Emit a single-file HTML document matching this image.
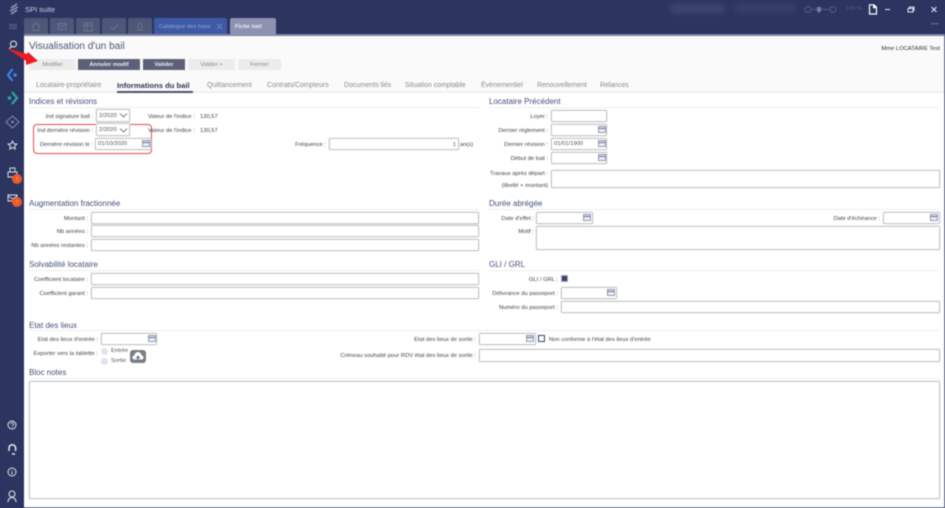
<!DOCTYPE html>
<html lang="fr"><head><meta charset="utf-8"><title>SPI suite</title>
<style>
html,body{margin:0;padding:0;background:#2c3560}
#p{position:relative;width:945px;height:508px;overflow:hidden;background:#2c3560;font-family:"Liberation Sans",sans-serif;filter:blur(.5px)}
#p div,#p svg{position:absolute}
.c{left:24px;top:36px;width:920px;height:472px;background:#fff}
.hd{left:24px;top:36px;width:920px;height:57px;background:#fafafa;border-bottom:2px solid #f0f0f0;box-sizing:border-box}
.t{white-space:nowrap;line-height:10px;height:10px}
.lb{white-space:nowrap;font-size:5.8px;line-height:12px;height:10px;color:#444;text-align:right}
.s{white-space:nowrap;font-size:8px;line-height:12px;color:#48507c}
.ln{height:1px;background:#eee}
.i{box-sizing:border-box;background:#fff;border:1px solid #c8c8c8;border-radius:1.5px;box-shadow:0 0 0 .5px #e4e4e4;font-size:5.8px;line-height:12px;color:#555;padding-left:2px;white-space:nowrap}
.tb{top:18px;width:24px;height:16px;background:#4f5778;border-radius:2px 2px 0 0}
.b{top:59px;height:11px;font-size:5.8px;line-height:13px;text-align:center;background:#ececec;color:#888}
.b.d{background:#5d6078;color:#eee;font-weight:bold}
.tab{top:81px;font-size:6.9px;line-height:10px;color:#8a8a8a;white-space:nowrap}
</style></head><body>
<div id="p">
<!-- title bar -->
<svg style="left:8px;top:3px" width="12" height="13" viewBox="0 0 12 13"><path d="M3 5 9 1M2 8 10 4M3 11 9 7" stroke="#8a90ab" stroke-width="1.7" fill="none"/></svg>
<div class="t" style="left:25px;top:5px;font-size:7.5px;color:#ccd0de">SPI suite</div>
<div style="left:9px;top:24px;width:8px;height:1px;background:#5f668a"></div>
<div style="left:9px;top:26px;width:8px;height:1px;background:#5f668a"></div>
<div style="left:9px;top:28px;width:8px;height:1px;background:#5f668a"></div>
<div style="left:670px;top:4px;width:55px;height:9px;background:#3d4570;filter:blur(3px)"></div>
<div style="left:735px;top:4px;width:60px;height:9px;background:#384069;filter:blur(3px)"></div>
<svg style="left:803px;top:4px" width="40" height="11" viewBox="0 0 40 11"><circle cx="5" cy="5.5" r="3" fill="none" stroke="#555d82"/><path d="M9 5.500H26" stroke="#555d82"/><path d="M14 3h4v4l-2 2-2-2z" fill="#777e9c"/><circle cx="30" cy="5.5" r="3" fill="none" stroke="#555d82"/></svg>
<div class="t" style="left:846px;top:4px;font-size:5.500px;color:#555d82">100 %</div>
<svg style="left:868px;top:4px" width="10" height="11" viewBox="0 0 10 11"><path d="M1.500.8H6L8.500 3.300V10H1.500Z" fill="none" stroke="#fff" stroke-width="1.200"/><path d="M5.500.8V3.800H8.500" fill="#fff" stroke="#fff"/></svg>
<div style="left:885px;top:9px;width:5px;height:1px;background:#e4e6ee"></div>
<svg style="left:907px;top:6px" width="8" height="7" viewBox="0 0 8 7"><path d="M1 2.500H6V6H1ZM2.500 2.500V1H7V4.500H6" fill="none" stroke="#e4e6ee"/></svg>
<svg style="left:930px;top:6px" width="8" height="7" viewBox="0 0 8 7"><path d="M1.500 1 6.500 6M6.500 1 1.500 6" stroke="#e4e6ee" stroke-width="1.100"/></svg>
<div class="t" style="left:931px;top:20px;font-size:6px;color:#7c83a3;letter-spacing:.5px">•••</div>
<div style="left:24px;top:34px;width:921px;height:2px;background:#7d83a6"></div>
<!-- top tabs -->
<div class="tb" style="left:24px"></div><div class="tb" style="left:50px"></div><div class="tb" style="left:76px"></div><div class="tb" style="left:102px"></div><div class="tb" style="left:128px"></div>
<svg style="left:24px;top:18px" width="130" height="16" viewBox="0 0 130 16" fill="none" stroke="#6b7293"><path d="M8 8.500 12 5l4 3.500M9 8v4.500h6V8"/><path d="M34 5.500h8v6h-8zM34 6l4 3 4-3"/><path d="M60 5h8v8h-8zM60 7.500h8M63 5v8"/><path d="M87 9l2.500 2.500L94 6.500"/><path d="M113 12h6M114 11V7.500a2 2 0 0 1 4 0V11"/></svg>
<div style="left:154px;top:18px;width:73px;height:16px;background:#3e5aa4;border-radius:2px 2px 0 0"></div>
<div class="t" style="left:159px;top:22px;font-size:5.800px;color:#94a6d2">Catalogue des baux</div>
<svg style="left:216px;top:23px" width="7" height="7" viewBox="0 0 7 7"><path d="M1 1 6 6M6 1 1 6" stroke="#6f84bd"/></svg>
<div style="left:230px;top:18px;width:46px;height:17px;background:#8d91b2;border-radius:2px 2px 0 0"></div>
<div class="t" style="left:235px;top:22px;font-size:5.800px;font-weight:bold;color:#e8e9f1">Fiche bail</div>
<!-- sidebar -->
<svg style="left:0;top:36px" width="24" height="472" viewBox="0 0 24 472" fill="none">
<circle cx="13.500" cy="8" r="3" stroke="#e8eaf2" stroke-width="1"/><path d="M11.500 10.500 9 13" stroke="#e8eaf2" stroke-width="1.100"/>
<path d="M12.500 33 8 39l4.500 6" stroke="#3d83ea" stroke-width="2.200"/><circle cx="15" cy="39" r="1.800" fill="#3d83ea"/>
<path d="M12 56l5 6-5 6" stroke="#27a99a" stroke-width="2.200"/><circle cx="9.500" cy="62" r="1.800" fill="#27a99a"/>
<path d="M12.500 80l6.500 6-6.500 6L6 86z" stroke="#7f86a3" stroke-width="1.100"/><circle cx="12.500" cy="86" r="1.400" fill="#7f86a3"/>
<path d="M12.500 105l1.300 2.700 3 .3-2.200 2 .6 3-2.700-1.500-2.700 1.500.6-3-2.200-2 3-.3z" stroke="#e2e4ee" stroke-width="1" />
<path d="M10 136v-4h5v4M8 136h9v5H8z" stroke="#dfe2ec" stroke-width=".9"/>
<path d="M8 159h9v6H8zM8 160l4.500 3 4.500-3" stroke="#dfe2ec" stroke-width=".9"/>
<circle cx="12" cy="389" r="4" stroke="#dfe2ec"/><path d="M10.500 388a1.500 1.500 0 1 1 2 1.500l-.5.800M12 391.500v.5" stroke="#dfe2ec" stroke-width=".8"/>
<path d="M9 415v-3a3.300 3.300 0 0 1 6.600 0v3M12 418h3" stroke="#e8eaf2" stroke-width="1.500"/>
<circle cx="12" cy="436" r="4" stroke="#dfe2ec"/><path d="M12 434v.8M12 435.500v3" stroke="#dfe2ec"/>
<circle cx="12" cy="458" r="3" stroke="#dfe2ec" stroke-width="1.100"/><path d="M8 466c0-6 8-6 8 0" stroke="#dfe2ec" stroke-width="1.100"/>
</svg>
<div style="left:12px;top:174px;width:10px;height:10px;border-radius:50%;background:#f0592a;color:#fff;font-size:4.500px;line-height:10px;text-align:center">!</div>
<div style="left:12px;top:197px;width:10px;height:10px;border-radius:50%;background:#f0592a;color:#fff;font-size:4.500px;line-height:10px;text-align:center">!</div>
<!-- content -->
<div class="c"></div>
<div class="hd"></div>
<div class="t" style="left:29px;top:41px;font-size:10px;line-height:11px;height:11px;color:#4a5274">Visualisation d'un bail</div>
<div class="lb" style="left:800px;width:140px;top:43px;color:#333">Mme LOCATAIRE Test</div>
<div class="b" style="left:29px;width:47px">Modifier</div>
<div class="b d" style="left:78px;width:62px">Annuler modif</div>
<div class="b d" style="left:143px;width:42px">Valider</div>
<div class="b" style="left:188px;width:47px">Valider +</div>
<div class="b" style="left:238px;width:43px">Fermer</div>
<div class="tab" style="left:36px">Locataire-propriétaire</div>
<div class="tab" style="left:117px;color:#2f3758;font-weight:bold;font-size:7.600px">Informations du bail</div>
<div style="left:117px;top:91px;width:76px;height:2px;background:#4a5274"></div>
<div class="tab" style="left:207px">Quittancement</div>
<div class="tab" style="left:267px">Contrats/Compteurs</div>
<div class="tab" style="left:344px">Documents liés</div>
<div class="tab" style="left:405px">Situation comptable</div>
<div class="tab" style="left:481px">Évènementiel</div>
<div class="tab" style="left:537px">Renouvellement</div>
<div class="tab" style="left:600px">Relances</div>
<!-- red annotation -->
<svg style="left:0;top:40px" width="45" height="30" viewBox="0 0 45 30"><path d="M7 8 27 14 28 12 38 21 26 25 26 21Z" fill="#ee1d23"/></svg>
<div style="left:33px;top:124px;width:119px;height:30px;border:1.500px solid #e8474e;border-radius:4px;box-sizing:border-box"></div>
<!-- Indices -->
<div class="s" style="left:29px;top:96px">Indices et révisions</div><div class="ln" style="left:29px;top:107px;width:450px"></div>
<div class="lb" style="left:30px;width:63px;top:111px">Ind signature bail :</div>
<div class="i" style="left:96px;top:109px;width:34px;height:13px">2/2020</div>
<svg style="left:119px;top:113px" width="9" height="5"><path d="M1 .5 4.500 4 8 .5" stroke="#7a8099" fill="none"/></svg>
<div class="lb" style="left:148px;top:111px">Valeur de l'indice :</div><div class="lb" style="left:200px;top:111px">130,57</div>
<div class="lb" style="left:30px;width:63px;top:125px">Ind dernière révision :</div>
<div class="i" style="left:96px;top:123px;width:34px;height:13px">2/2020</div>
<svg style="left:119px;top:128px" width="9" height="5"><path d="M1 .5 4.500 4 8 .5" stroke="#7a8099" fill="none"/></svg>
<div class="lb" style="left:148px;top:125px">Valeur de l'indice :</div><div class="lb" style="left:200px;top:125px">130,57</div>
<div class="lb" style="left:30px;width:63px;top:139px">Dernière révision le :</div>
<div class="i" style="left:95px;top:138px;width:56px;height:12px;padding-left:2px;line-height:11px">01/10/2020</div>
<div class="lb" style="left:280px;width:46px;top:139px">Fréquence :</div>
<div class="i" style="left:329px;top:138px;width:130px;height:12px;text-align:right;padding-right:2px">1</div>
<div class="lb" style="left:460px;top:139px">an(s)</div>
<!-- Locataire precedent -->
<div class="s" style="left:489px;top:96px">Locataire Précédent</div><div class="ln" style="left:489px;top:107px;width:451px"></div>
<div class="lb" style="left:480px;width:68px;top:111px">Loyer :</div><div class="i" style="left:551px;top:110px;width:56px;height:12px"></div>
<div class="lb" style="left:480px;width:68px;top:125px">Dernier règlement :</div><div class="i" style="left:551px;top:124px;width:56px;height:12px"></div>
<div class="lb" style="left:480px;width:68px;top:139px">Dernier révision :</div><div class="i" style="left:551px;top:138px;width:56px;height:12px;line-height:11px">01/01/1900</div>
<div class="lb" style="left:480px;width:68px;top:153px">Début de bail :</div><div class="i" style="left:551px;top:152px;width:56px;height:12px"></div>
<div class="lb" style="left:480px;width:68px;top:168px">Travaux après départ :</div>
<div class="lb" style="left:480px;width:68px;top:180px">(libellé + montant)</div>
<div class="i" style="left:551px;top:170px;width:389px;height:18px"></div>
<!-- Augmentation -->
<div class="s" style="left:29px;top:198px">Augmentation fractionnée</div><div class="ln" style="left:29px;top:209px;width:450px"></div>
<div class="lb" style="left:20px;width:68px;top:213px">Montant :</div><div class="i" style="left:91px;top:212px;width:388px;height:12px"></div>
<div class="lb" style="left:20px;width:68px;top:226px">Nb années :</div><div class="i" style="left:91px;top:225px;width:388px;height:12px"></div>
<div class="lb" style="left:20px;width:68px;top:240px">Nb années restantes :</div><div class="i" style="left:91px;top:239px;width:388px;height:12px"></div>
<!-- Duree -->
<div class="s" style="left:489px;top:198px">Durée abrégée</div><div class="ln" style="left:489px;top:209px;width:451px"></div>
<div class="lb" style="left:480px;width:54px;top:213px">Date d'effet :</div><div class="i" style="left:536px;top:212px;width:57px;height:12px"></div>
<div class="lb" style="left:800px;width:80px;top:213px">Date d'échéance :</div><div class="i" style="left:883px;top:212px;width:57px;height:12px"></div>
<div class="lb" style="left:480px;width:54px;top:226px">Motif :</div><div class="i" style="left:536px;top:226px;width:404px;height:24px"></div>
<!-- Solvabilite -->
<div class="s" style="left:29px;top:259px">Solvabilité locataire</div><div class="ln" style="left:29px;top:270px;width:450px"></div>
<div class="lb" style="left:20px;width:68px;top:274px">Coefficient locataire :</div><div class="i" style="left:91px;top:273px;width:388px;height:12px"></div>
<div class="lb" style="left:20px;width:68px;top:288px">Coefficient garant :</div><div class="i" style="left:91px;top:287px;width:388px;height:12px"></div>
<!-- GLI -->
<div class="s" style="left:489px;top:259px">GLI / GRL</div><div class="ln" style="left:489px;top:270px;width:451px"></div>
<div class="lb" style="left:480px;width:78px;top:274px">GLI / GRL :</div>
<div style="left:561px;top:275px;width:7px;height:7px;background:#3a4270;border:1px solid #aab;box-sizing:border-box"></div>
<div class="lb" style="left:480px;width:78px;top:288px">Délivrance du passeport :</div><div class="i" style="left:561px;top:287px;width:56px;height:12px"></div>
<div class="lb" style="left:480px;width:78px;top:302px">Numéro du passeport :</div><div class="i" style="left:561px;top:301px;width:379px;height:12px"></div>
<!-- Etat -->
<div class="s" style="left:29px;top:320px">Etat des lieux</div><div class="ln" style="left:29px;top:330px;width:911px"></div>
<div class="lb" style="left:20px;width:78px;top:334px">Etat des lieux d'entrée :</div><div class="i" style="left:101px;top:333px;width:56px;height:12px"></div>
<div class="lb" style="left:20px;width:78px;top:348px">Exporter vers la tablette :</div>
<div style="left:101px;top:348px;width:7px;height:7px;border-radius:50%;background:#e2e4ee"></div>
<div style="left:101px;top:358px;width:7px;height:7px;border-radius:50%;background:#e2e4ee"></div>
<div class="lb" style="left:111px;top:345px;color:#555">Entrée</div><div class="lb" style="left:111px;top:355px;color:#555">Sortie</div>
<div style="left:130px;top:350px;width:16px;height:13px;background:#7e7e7e;border-radius:3px"></div>
<svg style="left:132px;top:352px" width="12" height="9" viewBox="0 0 12 9"><path d="M2.500 7.500a2 2 0 0 1 0-4 3.500 3.500 0 0 1 7 0 2 2 0 0 1 0 4z" fill="#fff"/><path d="M6 8V5M4.500 6 6 4l1.500 2z" fill="#2e6fb8" stroke="#2e6fb8" stroke-width=".7"/></svg>
<div class="lb" style="left:380px;width:96px;top:334px">Etat des lieux de sortie :</div><div class="i" style="left:479px;top:333px;width:57px;height:12px"></div>
<div style="left:538px;top:335px;width:7px;height:7px;border:1px solid #3a4270;box-sizing:border-box"></div>
<div class="lb" style="left:549px;top:334px;color:#444">Non conforme à l'état des lieux d'entrée</div>
<div class="lb" style="left:300px;width:176px;top:350px">Créneau souhaité pour RDV état des lieux de sortie :</div><div class="i" style="left:479px;top:349px;width:461px;height:13px"></div>
<!-- Bloc notes -->
<div class="s" style="left:29px;top:367px">Bloc notes</div><div class="ln" style="left:29px;top:378px;width:911px"></div>
<div class="i" style="left:29px;top:381px;width:911px;height:118px"></div>
<div style="left:24px;top:507px;width:921px;height:1px;background:#9a9eb6"></div>
<div style="left:944px;top:36px;width:1px;height:472px;background:#8a8fae"></div>
<!-- calendar icons -->
<svg style="left:0;top:0" width="945" height="508" fill="#eceef5" stroke="#7a84a6" stroke-width=".8">
<rect x="142.500" y="140.500" width="7" height="6"/><rect x="598.500" y="126.500" width="7" height="6"/><rect x="598.500" y="140.500" width="7" height="6"/><rect x="598.500" y="154.500" width="7" height="6"/><rect x="583.500" y="214.500" width="7" height="6"/><rect x="930.500" y="214.500" width="7" height="6"/><rect x="607.500" y="289.500" width="7" height="6"/><rect x="148.500" y="335.500" width="7" height="6"/><rect x="526.500" y="335.500" width="7" height="6"/>
<path d="M142.500 142.500h7M598.500 128.500h7M598.500 142.500h7M598.500 156.500h7M583.500 216.500h7M930.500 216.500h7M607.500 291.500h7M148.500 337.500h7M526.500 337.500h7" stroke-width="1.200"/>
</svg>
</div>
</body></html>
